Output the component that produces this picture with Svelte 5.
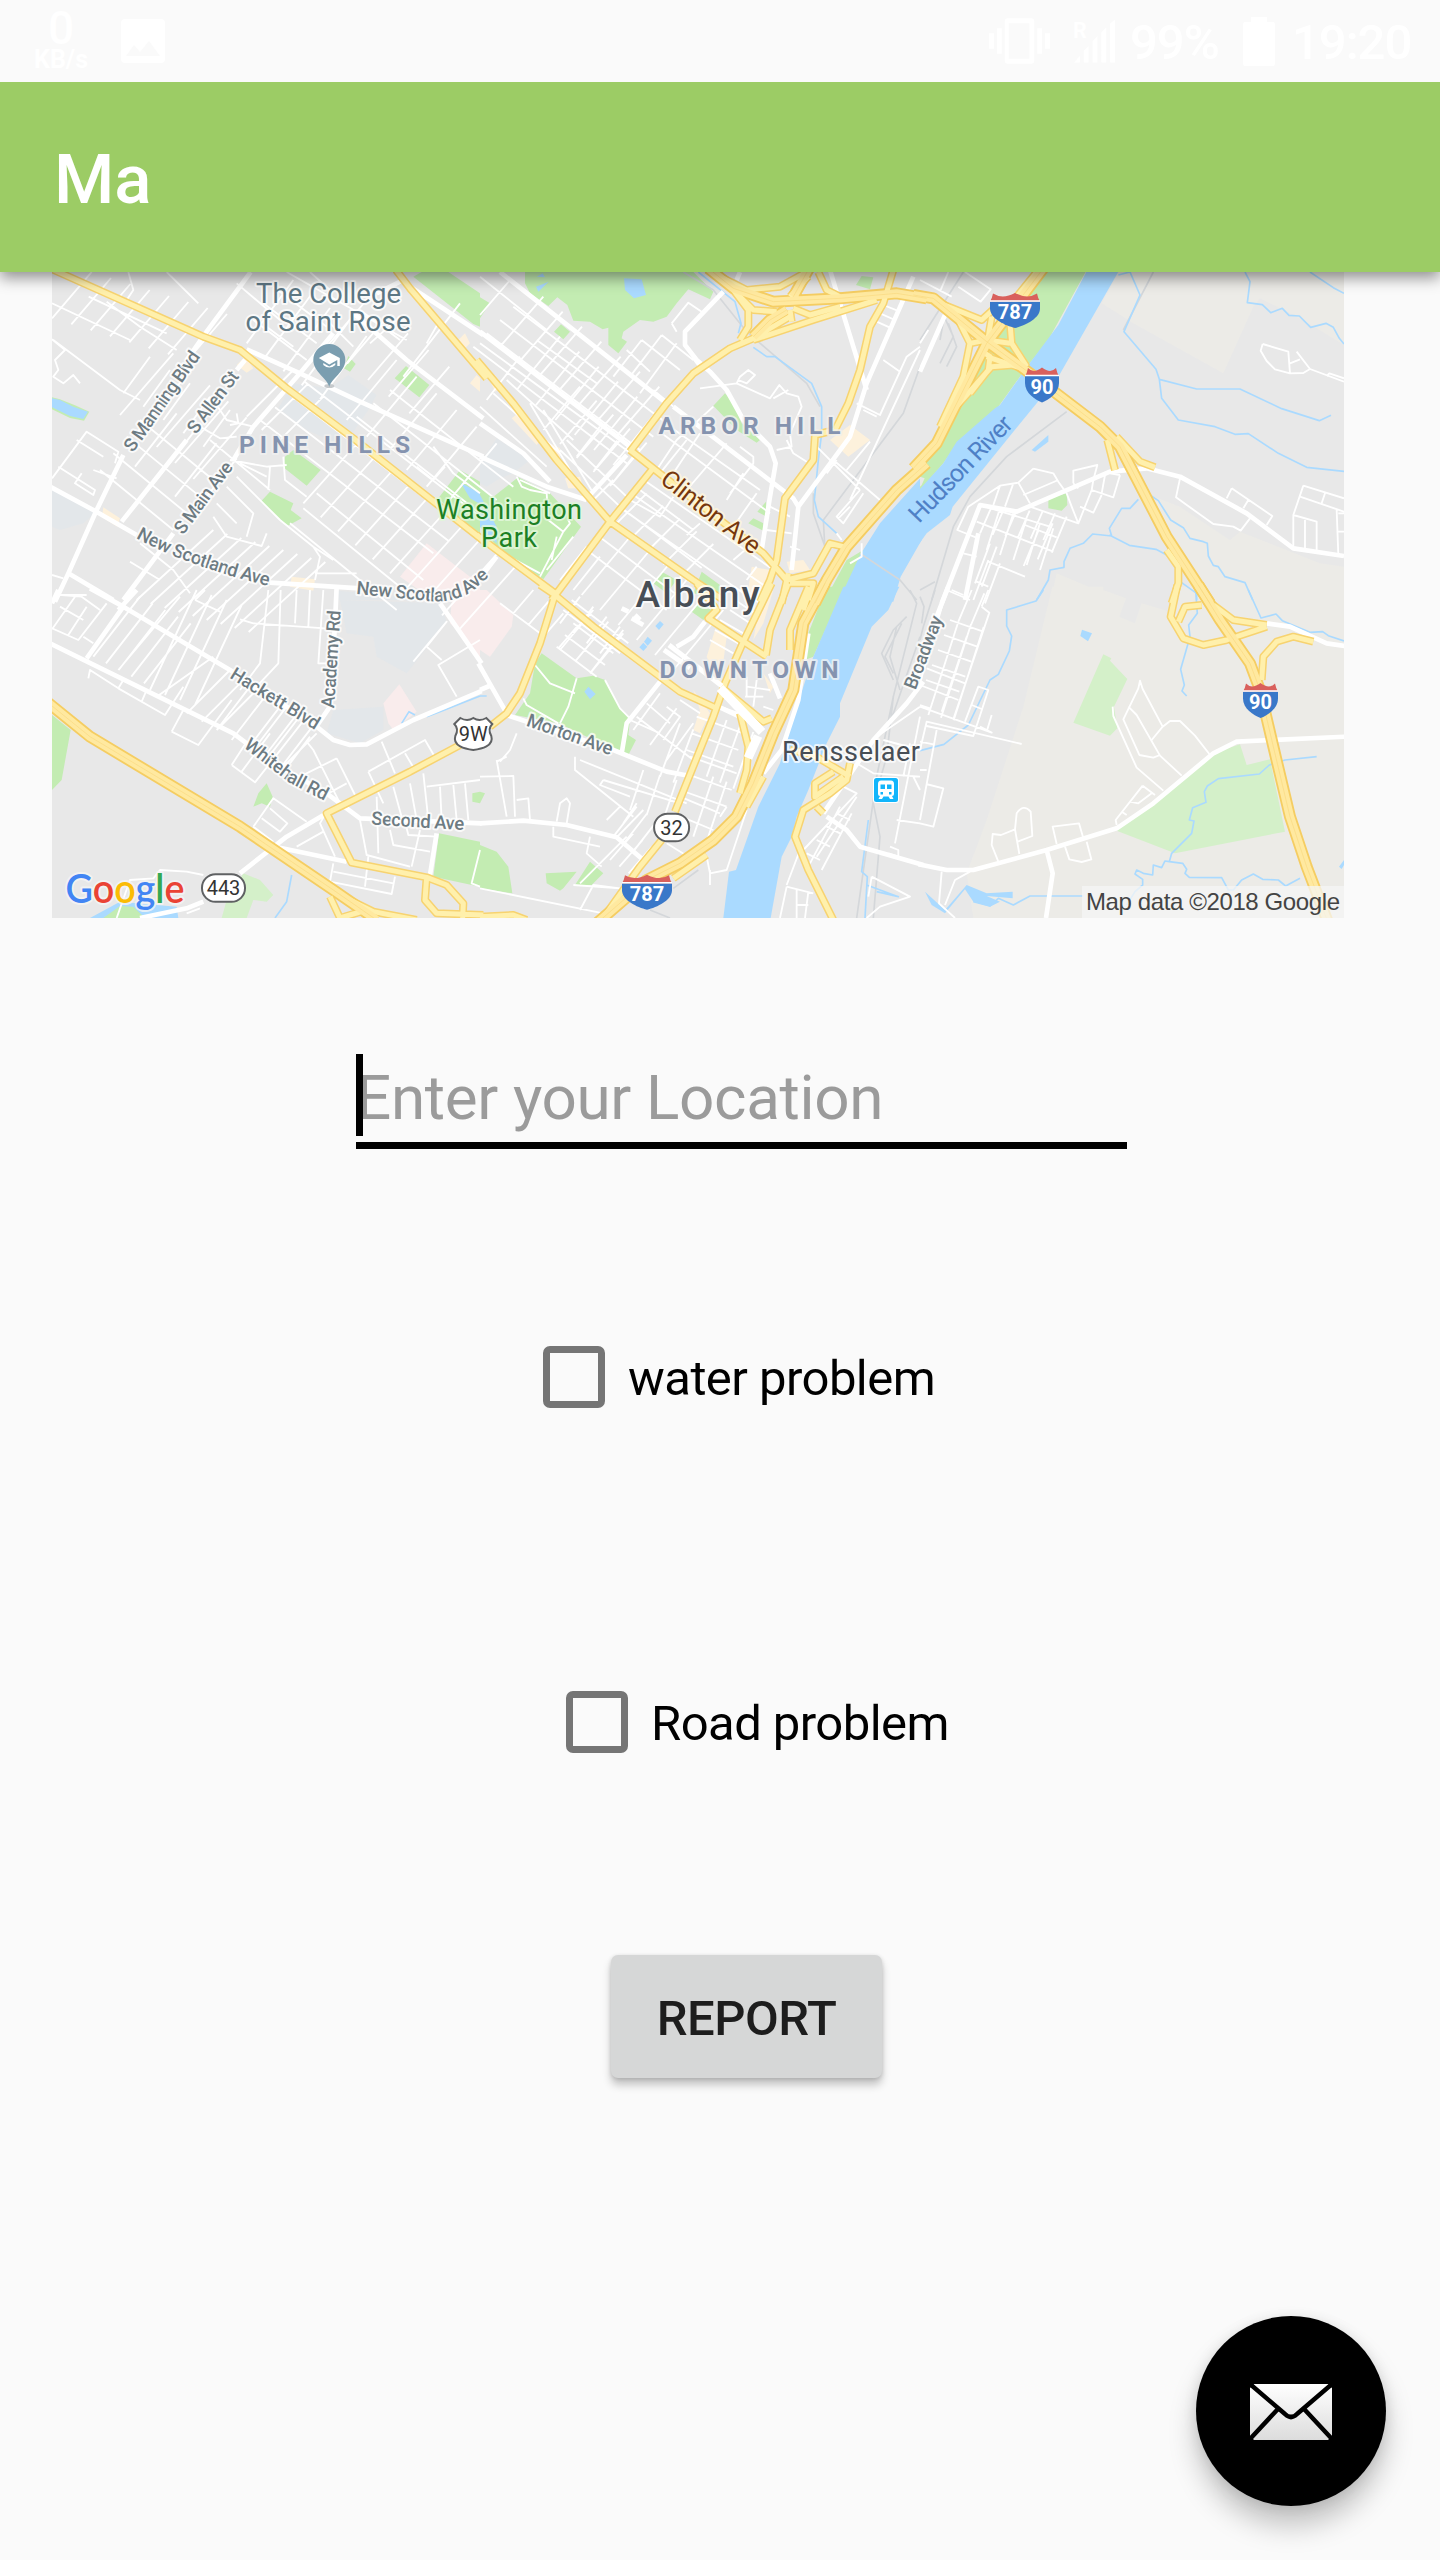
<script>
  // The map is authored as six sheets drawn at three times the display size.
  // Every sheet has an origin on the page and path data in its own units.
  // hatch entries: [x1, y1, x2, y2, step x, step y, count]
  const sheets = [
    {
      x: 40, y: 260,
      areas: [
        ['campus', 'M760 370L868 385L925 345L1010 405L985 450L940 515L880 545L800 510L715 445ZM36 690L170 755L130 790L60 810L36 800Z'],
        ['park', 'M1120 50L1145 36H1225L1320 100V200L1300 192ZM1098 318L1168 375L1138 412L1064 355ZM925 288L947 312L930 335L912 325ZM760 570L842 630L800 677L730 622L735 590ZM690 695L760 730L752 750L785 775L742 798L662 725ZM1260 630L1320 665V840L1195 715Z'],
        ['park', 'M36 412L60 418L105 436L148 455L132 482L90 474L36 448Z'],
        ['water', 'M36 415L60 420L100 440L144 455L130 477L90 468L36 442ZM1262 668L1320 700V732L1290 715Z'],
        ['pink', 'M1160 850L1290 950L1320 935V1020H1180L1080 950Z'],
        ['campus', 'M895 992L1200 1020H895Z'],
        ['shop', 'M590 315L615 290L640 325L620 338ZM190 742L240 775L232 800L186 772ZM755 950L825 958L820 992L750 980ZM1255 240L1275 220L1290 250L1275 265ZM1290 370L1310 345L1320 355V395Z']
      ],
      minor: 'M265 36L280 90L260 120M380 36L475 130M40 240L120 300L240 390L300 420M410 270L300 200L200 125M36 238L75 270L45 300L55 330L40 350L70 370L100 345L120 370M36 655L140 515L235 575L225 610M110 540L190 590M55 620L165 690L160 705L105 670L125 640M160 630L230 655M590 460L595 490L570 495M520 420L560 480L640 500M480 500L540 535L590 530M570 600L680 620L740 615M690 620L685 690M730 590L735 660L800 710M510 540L690 690M600 610L680 650M560 680L640 760L620 830M530 730L590 790M520 770L560 830L665 858L680 820M590 650L720 780M720 780L820 860L880 900M820 860L840 890L825 960M825 940H950M1180 560L1240 640L1320 700M1130 620L1180 660L1215 620M990 250L1080 170M850 170L940 260M680 200L760 260M590 70L720 180M300 850L400 930L450 1000M270 905L360 960M36 945L70 955M60 1005H140M740 36L1100 240M960 150L1080 240M810 36L870 90M1200 180L1160 250M1260 130L1090 350',
      hatch: [[36, 175, 155, 36, 58, 18, 8], [250, 400, 330, 290, 60, 40, 5], [240, 465, 400, 280, 55, 48, 5], [36, 130, 270, 240, 110, -20, 2], [285, 620, 410, 460, 60, 45, 4], [300, 480, 520, 660, -40, 50, 4], [620, 470, 760, 330, 45, 40, 3], [660, 480, 1180, 880, 45, -38, 4], [830, 700, 1150, 960, -40, 45, 3], [790, 730, 960, 540, 52, 42, 10], [920, 480, 1070, 300, 60, 50, 6], [860, 260, 980, 120, 62, 50, 5], [950, 470, 1320, 760, 50, -40, 3], [620, 250, 760, 60, 55, 42, 5], [290, 1020, 520, 810, 42, 12, 9], [640, 180, 800, 300, 30, -50, 3]],
      street: 'M632 36L500 215L440 300M250 585L170 750L85 940L45 1025M615 300L590 330M440 540L245 785M620 268L780 340L960 425L1330 590M880 220L780 340L640 500L580 600M400 820L250 1020M30 680L160 750L290 825M690 968L960 985M85 940L220 1020M940 160L1100 300L1330 475M1080 60L1330 225M1090 60L1010 100',
      artery: 'M30 25L490 230L600 270L740 385L940 535L1340 850M1068 30L1110 85L1340 355',
      highway: '', rail: '', stream: ''
    },
    {
      x: 480, y: 260,
      areas: [
        ['park', 'M135 36H640L700 95L690 118L625 88L590 130L560 170L520 185L480 180L430 215L425 235L441 245L415 280L385 255L385 203L368 208L330 185L280 182L262 135L232 112L205 138L150 100L135 70ZM0 112L30 130L0 175ZM243 193L270 215L250 238L222 215ZM735 400L760 430L785 490L840 540L830 548L770 510L700 437ZM0 680L40 710L115 652L210 700L303 800L190 958L150 930L60 870L0 800ZM858 725L860 770L832 755ZM820 775L850 790V812L805 790ZM1128 75L1145 48L1180 52L1170 88ZM545 935L590 960L560 1000L520 970ZM665 935L720 975V1020L640 1000ZM1150 870L1080 1020H1035L1100 900Z'],
        ['campus', 'M50 535L150 600L100 640L60 655L20 680L0 670V610Z'],
        ['water', 'M0 705L50 800V850L0 800ZM432 55L485 58L498 105L462 115L435 90ZM170 50L188 40L195 52ZM168 80L206 65L175 95Z'],
        ['water', 'M1325 650L1200 790L1140 885L1075 1025H1240L1262 950L1325 840Z'],
        ['shop', 'M25 350L45 345L70 380L45 395ZM95 475L120 455L190 530L170 555ZM200 545L240 565V600L215 580ZM255 655L300 650L310 685L265 685ZM1050 540L1110 495L1170 540L1105 590ZM920 905L970 900L990 930L930 940ZM815 920L870 930L850 1020H800ZM715 780L745 790L740 810Z']
      ],
      rail: 'M700 90L800 215L980 370L1020 440M1320 320L1270 460L1030 780L1035 870M610 36L700 90M1000 700V760L1035 860M1140 880L1260 960L1310 1020',
      stream: 'M655 36L765 125L783 190L775 220M820 262L860 290L885 290L995 370L1025 440L1025 520L1015 600L1003 720L1015 770L1070 820',
      minor: 'M0 50L200 210M90 60L0 165M580 440L520 390M575 190L625 128L665 155M575 190L590 215M660 385L770 370L780 350L805 330L825 345L800 370L775 360M770 370L870 415L898 375L920 400L955 410L965 440L930 520L935 560L890 570M925 390L880 415M920 540L940 580L980 605M545 225L640 300M485 240L600 330M440 270L510 335M485 240L400 350M545 225L450 350M590 250L480 400M700 440L590 540L530 630M545 520L870 760M570 500L840 690M780 560L820 590L820 610L750 700M740 550L620 690M620 540L540 640M660 520L580 640M790 640L740 720M660 790L620 825M830 700L760 800M500 640L440 720M480 690L640 810M450 720L540 770L580 710M400 660L340 720M860 810L935 820M870 740L930 770M830 840L760 900M800 960L830 920M1010 560L1140 690M1060 600L1200 720M1170 545L1100 630M1140 690L1070 770L1090 790L1150 700M1070 600L1040 640M1110 740L1075 775M1070 820L1085 840M1210 300L1260 335M1320 260L1280 290L1200 465L1130 430M1190 470L1150 450M1200 160L1245 180M1210 135L1260 155M1190 185L1235 205M1110 720L1320 270M1145 850V890L1110 910M960 870L930 860M110 650L125 680L150 690L200 700L205 780L250 815L270 790L265 780M250 815L180 950M230 830L215 900M50 870L180 940M120 660L210 700',
      hatch: [[0, 250, 480, 600, 45, -45, 1], [170, 240, 350, 370, 0, 0, 1], [20, 420, 120, 290, 0, 0, 1], [60, 260, 190, 110, 58, 45, 7], [110, 390, 240, 230, 58, 45, 6], [190, 510, 300, 380, 50, 42, 5], [290, 590, 360, 500, 52, 42, 3], [100, 140, 560, 490, -40, 40, 4], [0, 440, 200, 620, 40, -40, 3], [150, 430, 300, 680, 40, 20, 2], [240, 570, 420, 740, 20, -30, 2], [250, 960, 400, 780, 55, 45, 7], [320, 870, 560, 1050, 35, -42, 4], [400, 800, 500, 700, 50, 38, 5], [430, 750, 820, 1020, 35, -42, 3], [280, 830, 200, 930, 40, 30, 3]],
      street: 'M60 36L560 430M580 440L940 715L955 740M0 215L450 560M440 585L330 705M730 95L615 215L615 255L650 300L690 335L740 390L790 480L870 560L887 610L870 710L845 870M955 740L1110 530L1160 370L1300 50M1050 30L1080 130L1160 390M0 590L200 680L320 720M955 740L935 930M0 490L130 580L210 665M640 290L670 330M50 890L0 955M770 60L780 36',
      artery: 'M-10 300L100 430L230 600L390 785L640 960L730 1020M-10 825L225 1000M215 1020L390 785L515 630M450 570L545 645L850 880L920 960L1000 940L1050 850L1090 860M450 575L560 430L640 340L750 265L820 235L930 170M820 240L1000 180L1190 120M1240 30L1210 130L1170 200L1140 330L1105 430L1065 510L1005 525L1000 600L915 715L890 900L870 960L840 1025M925 940L905 1030M760 90L805 150V200L780 240M720 50L800 90L900 80L980 36M770 100L820 150L890 155M930 150L935 185M940 145L990 165L1080 140M985 50L930 110M1015 36L1040 90L1080 110M930 970H1000L985 1020',
      highway: 'M685 25L760 85L880 125L1080 115L1250 100L1340 115M990 20L940 110M820 230L870 180L920 150M1340 610L1250 690L1100 860L1040 960L1005 1030'
    },
    {
      x: 920, y: 260,
      areas: [
        ['rural', 'M600 30H1272V255L1190 205L1130 170L1020 115L1000 140L910 340L640 190L545 130ZM690 705L780 740L930 840L960 815L1200 910L1272 920V1020H870L780 900L720 760ZM410 940L600 1020H392Z'],
        ['park', 'M385 30H500L385 240L325 315L235 440L115 545L70 610L10 680L0 690V620L100 440L200 250L300 130ZM385 715L440 700L442 735L425 752L385 745Z'],
        ['land', 'M0 650L14 655L5 675L0 680Z'],
        ['water', 'M502 30L415 195L325 315L240 435L225 445L110 545L70 610L-5 692V855L20 820L90 765L98 740L260 540L415 350L598 30ZM335 570L385 525V545L345 575Z']
      ],
      rail: 'M130 36L0 240M700 36L610 210M440 455L260 590L150 710L100 800L35 1020M70 185L60 240M85 190L110 260L80 320M75 175L100 230L60 310M0 990L45 965',
      stream: 'M595 45L630 36L660 105L612 215L708 328L718 358L725 415L775 480L885 500L945 523L985 521L1075 580L1160 622L1272 634M718 358L830 387H960L1085 446L1198 482L1233 466M975 36L990 65L982 128L1027 134L1052 158L1087 145L1107 166L1138 168L1172 202L1218 190L1240 202L1258 235L1272 252M1170 36L1240 83L1272 100M655 718L630 745H605L568 805L575 828L518 822L490 850L450 865L432 905V922L390 930L385 960L350 1020M568 825L628 856L708 868L750 890M690 705L715 722L752 780L790 803L810 835L850 845L862 850L865 888L880 916L895 920L915 950L975 968L998 1020M785 968L830 1000V1020',
      minor: 'M135 36L212 88L182 125L115 80M85 36L60 95M0 60L95 110M25 210L0 250M1028 252L1022 272L1040 303L1065 328L1110 340L1150 339L1170 327L1130 275M1028 252L1105 275L1110 340M1110 310L1140 298M1170 327L1272 365M1220 348L1228 340L1272 355M340 626L295 668L330 730M340 626L400 640L415 665L440 700L455 740L475 790M295 668L240 677L145 740L112 810L175 835M310 705L415 660M460 670V632L532 615L520 660M460 670L475 685M600 645L580 712L515 690M545 705L520 758L480 740M520 660L515 690L475 790L330 740M555 645L545 700M570 640L600 645M780 655L768 712L880 792L940 800L962 812L990 775M935 685L920 715M935 685L1057 768L1040 795M985 720L970 745M1150 677L1120 765V860M1150 677L1272 715M1140 710L1272 755M1215 700L1205 730M1120 765L1190 785V870M1155 780V865M1250 750L1255 885M1272 760H1255M1272 815H1255M240 677L220 735M280 670L255 740M180 735L390 800',
      hatch: [[215, 740, 180, 820, 38, 4, 6], [200, 870, 240, 745, 40, 15, 5], [170, 785, 400, 875, -20, 50, 1], [130, 880, 170, 890, -10, 40, 1], [205, 905, 315, 950, 20, -55, 1], [315, 795, 410, 832, 20, -45, 1], [440, 770, 395, 878, -42, 20, 3], [210, 850, 165, 970, 20, 10, 2], [170, 965, 205, 980, -75, 25, 2], [160, 1020, 205, 900, 35, 10, 2]],
      street: 'M75 165L0 335M65 1030L180 735L290 755L430 695L570 635L680 625L780 650L980 760L1120 865L1272 888M135 1020L175 820',
      artery: 'M60 130L185 180L240 130M110 170L150 250L130 350L60 500M200 260L215 170M150 250L200 240L260 180M180 270L210 290L205 330L150 400M200 290L260 310L320 330M270 190L275 250L320 320M100 450L215 320L280 315M200 240L270 250M562 540L585 630M590 530L660 605L705 622M740 870L775 920V970L755 1030M290 110L350 36',
      highway: 'M-20 105L40 115L200 245L330 340L540 500L600 560L740 830L870 1030M370 25L200 250L140 370L50 550L-20 625'
    },
    {
      x: 40, y: 590,
      areas: [
        ['campus', 'M900 30L1200 40L1220 95L1100 250L1010 200L1000 140L920 130ZM880 360L1030 350V420L960 460L860 430Z'],
        ['pink', 'M1235 30L1320 0V215L1290 160L1230 100ZM1078 283L1130 365L1060 420L1045 400L1030 340Z'],
        ['park', 'M36 375L92 420L65 570L36 600ZM680 580L698 620L690 650L665 640L640 650L655 610ZM1197 730L1320 755V890L1180 860ZM185 984L240 945L290 948L315 984ZM1297 610L1320 605V640L1297 635Z'],
        ['wood', 'M610 850L660 870L700 915L680 935L640 930L620 984H545L560 930Z'],
        ['water', 'M150 984L240 935L410 950L415 984H315L280 950L240 948L190 984Z']
      ],
      rail: '',
      stream: 'M755 855L740 935L705 984M1320 318L1200 365L1160 380M1125 375L1107 365L1085 400M620 270L740 340',
      minor: 'M36 115L115 150L200 40M65 15L125 20L180 60M36 118L105 20M85 135L140 50M130 140L160 160M145 265L150 240L235 295L375 375L430 290M235 295L250 270M305 335L320 300M395 425L475 465L575 330M430 360L395 425M600 88L640 100L855 115M685 0L660 220L600 300M722 0L715 220L640 300M770 0L765 100M810 0L805 110M850 0L835 220H860M465 30L540 65M465 30L495 0M575 525L645 577L800 380M575 525L620 455M605 545L690 430M720 540L830 430M750 520L810 440M800 455L820 480L900 640M890 505L780 560M890 505L945 615M865 610L920 580M1025 455L1065 550M985 545L1155 450L1190 510M985 545L1030 640M1095 490L1125 540M1160 170L1220 95L1120 215M1160 170L1205 210M1320 150L1195 225L1250 320M640 710L700 625L800 695M640 710L700 755M665 685L720 725L742 700L690 655M860 665L840 700L885 800M770 770L850 725M960 690L980 795L1110 830M880 820L870 875L1055 912L1065 860M880 845L1060 880M985 800L975 890M230 984L270 870L340 865L360 840L440 845L490 855M1160 590L1320 570M1200 590L1205 690M1240 585L1250 690M1275 580L1285 690M1150 550L1165 690M1060 590L1090 700M1110 580L1130 690M1010 620L1015 790M1050 720L1060 765L1170 785M1100 715L1105 735L1190 740M1140 720L1115 830M1320 780L1295 880L1320 890M440 970L480 955',
      hatch: [[160, 200, 300, 20, 38, 20, 5], [235, 240, 420, 20, 0, 0, 1], [330, 300, 470, 0, 45, 15, 4], [350, 320, 520, 200, 0, 0, 1], [440, 370, 570, 240, 45, 25, 3], [530, 420, 630, 290, 45, 30, 4], [640, 480, 740, 350, 40, 28, 3], [60, 50, 130, 90, 0, 0, 1]],
      street: 'M150 -5L250 50L570 240L620 270L830 410L880 450L930 465L980 463L1120 390L1325 303M30 160L580 430L700 520L860 610L960 685L1325 700M250 50L140 205M235 60L290 0M890 -10L885 100L870 350L825 415M1200 40L1325 220M860 670L740 740L600 850M705 770L920 815M1190 730L1170 855M300 984L440 955L490 935M55 0L36 40',
      artery: 'M1260 465L1110 545L860 670L935 818L1160 862L1220 885L1270 940L1268 984M1160 862L1155 930L1190 970L1330 975M870 920L900 984M930 930L1000 965L1130 990M900 984L980 960',
      highway: 'M20 335L150 440L600 710L880 900L1010 990'
    },
    {
      x: 480, y: 590,
      areas: [
        ['pink', 'M0 0H20L100 75L95 110L30 200L0 180Z'],
        ['park', 'M185 190L290 265L340 257L375 270L420 355L450 390L445 435L468 450L445 495L415 485L235 400L105 375L150 310L165 220ZM0 765L50 785L85 830L97 910L0 895ZM197 850L290 845L250 895L240 902L200 880ZM330 815L370 850L335 885L285 885ZM655 40L695 60L670 90L635 65ZM1095 -10L1000 200L975 210L985 130L1040 -10ZM0 605L15 610L0 640Z'],
        ['shop', 'M705 120L740 140L720 290L680 200ZM640 300L690 370L660 430L640 420L660 360ZM840 40L880 0L850 100L820 150ZM850 250L880 290L870 310Z'],
        ['water', 'M1090 -10L1000 200L950 350L900 520L835 650L768 840L747 845L730 984H872L905 800L935 740L950 680L985 600L1040 460L1080 380V340L1175 110L1225 60L1258 -10ZM540 93L551 103L537 120L526 108ZM503 140L516 152L503 167L492 155ZM490 158L502 170L490 183L478 172ZM325 290L347 312L330 328L313 305Z']
      ],
      rail: 'M1290 0L1310 40L1240 320L1190 560L1130 984M1280 80L1240 120L1205 190L1240 270M1250 110L1230 200L1260 300M1265 100L1215 200L1240 250M1240 320L1220 500L1180 640L1200 740L1180 984M1320 140L1230 400M655 840L580 895M510 960L570 984',
      stream: 'M1165 690L1145 845L1162 860L1155 984M1160 885L1255 920L1190 905M0 318H20',
      minor: 'M165 225L210 280L285 310M290 265L265 350L240 400M375 270L420 355L450 385M130 325L140 345L235 400M0 560L100 558L105 680M50 510L80 680M60 515L90 480L110 430M50 515L80 500M285 500V540L460 680M300 510L620 640M370 570L360 585L450 620M370 570L600 640M110 630L145 625L150 690M230 695L240 640L260 625L270 640L260 700M220 710V740L360 770M330 740L320 790L365 830M280 885L420 895L340 885L300 960M0 895L370 970M420 650L380 690M470 640L430 700M410 742L490 660M300 880L440 740M680 800L690 850L740 840L800 660M690 840V885M720 680L740 650M560 760L625 800M500 340L570 400M450 390L540 430M470 380L640 510M560 350L600 380L550 450M600 330L660 370M1000 0M920 890L1000 910M920 890L900 984M950 900V984M985 905L975 984M950 945H985M970 780L1130 610L1090 590M1130 620L1010 800M920 885L960 780M1175 860L1290 920L1200 950L1160 984M1175 860L1165 920M1230 770L1255 780V800L1225 790M1320 350L1190 440M1130 520L1180 550L1320 560M1300 560L1320 600M1320 380L1245 760M1250 690L1320 700M1210 450L1320 480M1290 460L1270 560M800 290L870 300M795 320H850M800 260V320M830 270L820 350M850 350L880 360',
      hatch: [[100, 70, 160, 0, 45, 35, 4], [240, 100, 300, 20, 40, 30, 4], [60, 40, 180, 130, 30, -40, 1], [240, 180, 340, 60, 45, 35, 3], [250, 60, 420, 190, 25, -30, 2], [330, 250, 430, 120, 0, 0, 1], [230, 170, 350, 260, 25, -35, 3], [460, 420, 540, 310, 50, 45, 3], [540, 560, 600, 400, 40, 18, 2], [620, 480, 760, 530, 15, -50, 4], [600, 600, 740, 650, 15, -50, 3], [580, 670, 700, 720, 20, -50, 2], [680, 560, 740, 390, 40, 18, 3], [640, 740, 700, 560, 40, 15, 2], [450, 660, 490, 540, 50, 15, 3], [400, 740, 470, 650, 30, 22, 4], [390, 810, 460, 730, 28, 20, 3], [990, 820, 1080, 650, 35, 20, 2], [980, 790, 1020, 810, 30, -40, 4], [690, 150, 760, 190, 15, -30, 3], [750, 60, 810, 100, 15, -30, 3]],
      street: 'M1330 275L1280 340L1180 450L1030 670M1040 680L1100 720L1140 770L1330 825M540 275L440 400L425 490M80 375L400 480L560 545L630 558M-5 220L80 370M0 700L130 692L260 705L410 742L490 810M675 95L640 140L590 170M715 350L790 385M985 130L955 330L905 480L850 550M870 250L900 325M0 300L35 285M455 85L490 105M465 75L480 90M425 55L445 65',
      artery: 'M180 -15L225 15L340 110L540 260L600 305L710 355M228 5L180 160L120 310L80 370L30 410M875 -20L790 155L735 280L700 380L585 665M925 -20L870 120L858 195M650 -20L710 60L685 85L860 200M735 300L850 395L875 385M545 750L480 830L365 990M930 480L1000 495L1110 560M1110 520L1100 570L1050 610L970 660L945 740L985 840L1060 990M1060 545L1005 580V620L1090 560M1010 650L1030 670M780 370L805 470L800 540L780 610M850 560L800 650M680 795L580 865M985 -10L930 120V180M0 980L100 975L140 990M990 0L970 60',
      highway: 'M1035 -20L970 100L940 300L880 430L820 580L770 680L700 750L600 820L500 870L350 1000'
    },
    {
      x: 920, y: 590,
      areas: [
        ['rural', 'M397 -10H550V0L618 25L598 80L645 100L665 40L750 65L760 -10H1272V984H160L140 850L200 690L310 350Z'],
        ['wood', 'M550 193L574 205L570 212L622 267L582 350L592 415L570 437L460 398ZM960 463L980 525L1050 508L1095 725L765 790L590 722L700 640L880 490Z'],
        ['water', 'M486 119L516 130L504 154L481 138ZM15 905L75 960L140 885L200 910L278 905V925L200 918L240 935L210 950L160 935L135 898L75 970L35 945ZM1272 810L1257 830L1265 837L1272 825Z']
      ],
      rail: 'M45 0L10 110L0 150M0 20L12 50L5 100',
      stream: 'M370 0L348 33L260 60V108L275 138L268 183L235 253L210 270L145 405L72 463L0 482M985 0L1023 84L1068 72L1087 92L1170 127L1208 125L1225 137L1272 153M827 0L832 70L806 105L810 140L782 238L793 285L786 303L800 318M1190 500L1095 510L1048 525L1018 552L895 566L862 588L853 605L858 637L818 653L808 690L822 693L815 730L755 790L748 815L735 813L725 833L700 825L698 855L670 850L650 840L645 852L668 868V885L645 905L620 945M748 815L788 820L800 838L795 850L808 862L905 863L925 900H940L965 870L1000 852L1028 868L1075 870L1097 888L1140 865M160 935L210 948L235 925L280 945L330 918H490',
      minor: 'M0 480L20 395L305 462M0 350L215 428L180 410M215 375L200 425M20 408L160 438L205 300L175 290L135 395M155 345L185 357M50 420L0 690M0 455L40 463M0 540H20M18 582L70 595L40 710L0 700M185 50L208 68L100 388M205 0L185 50M655 295L660 272L668 297L728 410L695 450M655 295L610 388L658 495L700 503L720 495M625 350L650 375L720 497L785 557M728 410L750 393H780L825 437L868 492M578 350L580 378L650 533L730 602M668 587L705 615M668 587L587 690L590 705M695 610L655 640L630 635M605 665L620 675M235 815L215 765L218 732L243 735L285 718L290 670Q310 640 332 665L337 738L293 755M285 718L298 792M410 762L398 710L477 700L490 745M435 770L448 808L485 816L514 808L500 755M65 845L57 940L105 984M75 945L105 870L150 845',
      hatch: [[0, 280, 80, 0, 0, 0, 1], [25, 375, 115, 95, 38, 8, 3], [90, 90, 190, 125, -18, 45, 5], [80, 0, 150, 30, 30, 0, 1], [115, 95, 155, 0, 38, 10, 2], [0, 345, 30, 355, 0, 0, 1], [65, 365, 140, 140, 0, 0, 1], [0, 285, 115, 330, 20, -50, 2]],
      street: 'M85 -10L50 80M1040 100L1110 110L1220 160L1275 168M-5 823L80 840H160L380 780L590 715L700 640L880 490L950 455L1275 440M380 780L398 850L378 984',
      artery: 'M772 -15L752 80L790 145L850 165L920 150L1040 110M845 45L795 50L775 95M880 45L940 90L1040 105M1180 155L1120 140L1070 155L1030 200L1025 270',
      highway: 'M835 -15L900 90L990 220L1020 300L1060 470L1110 680L1160 830L1225 1000'
    }
  ];

  const hatchPath = (rows) =>
    rows
      .map(([a, b, c, d, sx, sy, n]) =>
        Array.from({ length: n }, (_, i) => `M${a + sx * i} ${b + sy * i}L${c + sx * i} ${d + sy * i}`).join('')
      )
      .join('');

  const labels = [
    { t: 'The College', k: 'poi', d: 'M256 303H420', w: 145 },
    { t: 'of Saint Rose', k: 'poi', d: 'M245.5 331H430', w: 165 },
    { t: 'PINE HILLS', k: 'area', d: 'M239 452.5H430', w: 171 },
    { t: 'ARBOR HILL', k: 'area', d: 'M658.5 433.5H860', w: 182 },
    { t: 'DOWNTOWN', k: 'area', d: 'M659.5 677.5H860', w: 179 },
    { t: 'Albany', k: 'city', d: 'M635.5 606.5H780', w: 124 },
    { t: 'Washington', k: 'green', d: 'M436 518.5H600', w: 146 },
    { t: 'Park', k: 'green', d: 'M481 546.5H570', w: 56 },
    { t: 'Clinton Ave', k: 'brown', d: 'M659 482L759 560', w: 119 },
    { t: 'Hudson River', k: 'river', d: 'M919 524L1025 414', w: 137 },
    { t: 'Broadway', k: 'road', d: 'M915.5 690.5L950 600', w: 77 },
    { t: 'S Manning Blvd', k: 'road', d: 'M133 453L211.5 341', w: 118 },
    { t: 'S Allen St', k: 'road', d: 'M196 435L250.5 362', w: 73 },
    { t: 'S Main Ave', k: 'road', d: 'M183 535.5L245.5 451', w: 85 },
    { t: 'New Scotland Ave', k: 'road', d: 'M136 538Q190 568 285 590', w: 141 },
    { t: 'New Scotland Ave', k: 'road', d: 'M356 594L420 600Q452 605 472 591L500 567', w: 141 },
    { t: 'Academy Rd', k: 'road', d: 'M334 708.5L342 590', w: 98 },
    { t: 'Hackett Blvd', k: 'road', d: 'M229 677.5L331.5 740', w: 101 },
    { t: 'Whitehall Rd', k: 'road', d: 'M243 747L290 783L340 809', w: 98 },
    { t: 'Second Ave', k: 'road', d: 'M371 824.5L480 831', w: 93 },
    { t: 'Morton Ave', k: 'road', d: 'M525.5 725.5L630 762', w: 90 },
    { t: 'Rensselaer', k: 'town', d: 'M782 761H940', w: 138 }
  ];

  const interstates = [
    { x: 1015, y: 310.5, w: 50, n: '787' },
    { x: 1042, y: 385, w: 34, n: '90' },
    { x: 647, y: 892.2, w: 50, n: '787' },
    { x: 1260.5, y: 700.5, w: 35, n: '90' }
  ];
  const routes = [
    { x: 223.5, y: 888, w: 43, n: '443' },
    { x: 671.6, y: 827.5, w: 35, n: '32' }
  ];
  const crest = (w) =>
    `M${-w / 2 + 3} -17Q${-w / 4} -11 0 -17.5Q${w / 4} -11 ${w / 2 - 3} -17Q${w / 2 - 2} -12 ${w / 2} -9H${-w / 2}Q${-w / 2 + 2} -12 ${-w / 2 + 3} -17Z`;
  const body = (w) => `M${-w / 2} -9H${w / 2}V-2C${w / 2} 8 ${w / 5} 15 0 17.5C${-w / 5} 15 ${-w / 2} 8 ${-w / 2} -2Z`;
</script>

{#snippet layer(key)}
  {#each sheets as s}
    <path class={key} transform="translate({s.x} {s.y}) scale(0.33333)" d={s[key]} />
  {/each}
{/snippet}

<div class="screen">
  <header class="status">
    <div class="speed"><b>0</b><small>KB/s</small></div>
    <svg class="photo" viewBox="0 0 44 44"><path fill-rule="evenodd" d="M4 0H40Q44 0 44 4V40Q44 44 40 44H4Q0 44 0 40V4Q0 0 4 0ZM5 37H39L28 22L19 33L13 26Z" /></svg>
    <div class="tray">
      <svg class="vibrate" viewBox="0 0 62 46"><path fill-rule="evenodd" d="M19 0H43Q46 0 46 3V43Q46 46 43 46H19Q16 46 16 43V3Q16 0 19 0ZM20 5V41H41V5ZM0 15H5V31H0ZM8 10H13V36H8ZM49 10H54V36H49ZM57 15H62V31H57Z" /></svg>
      <svg class="signal" viewBox="0 0 42 44"><path d="M0 44L6 37V44ZM10 32L15 27V44H10ZM19 22L24 17V44H19ZM28 13L33 8V44H28ZM37 4L42 0V44H37Z" /><text x="-1" y="19">R</text></svg>
      <span class="percent">99%</span>
      <svg class="battery" viewBox="0 0 32 49"><path d="M8 0H24V5H30Q32 5 32 7V47Q32 49 30 49H2Q0 49 0 47V7Q0 5 2 5H8Z" /></svg>
      <span class="time">19:20</span>
    </div>
  </header>

  <div class="appbar"><h1>Ma</h1></div>

  <main>
    <svg class="map" viewBox="52 272 1292 646">
      <rect class="land" x="52" y="272" width="1292" height="646" />
      {#each sheets as s}
        <g transform="translate({s.x} {s.y}) scale(0.33333)">
          {#each s.areas as [kind, d]}<path class={kind} {d} />{/each}
        </g>
      {/each}
      {@render layer('rail')}
      {@render layer('stream')}
      {#each sheets as s}
        <path class="minor" transform="translate({s.x} {s.y}) scale(0.33333)" d={s.minor + hatchPath(s.hatch)} />
      {/each}
      {@render layer('street')}
      <g class="casing">{@render layer('artery')}{@render layer('highway')}</g>
      <g class="fill">{@render layer('artery')}{@render layer('highway')}</g>
      <g class="median">{@render layer('highway')}</g>
      <path class="plaza" d="M720 688L762 732M758 736L748 758" />
      <path class="plaza thin" d="M669 645L722 686M664 650L690 668" />

      {#each labels as l, i}
        <path id="run{i}" d={l.d} fill="none" />
        <text class={l.k}><textPath href="#run{i}" textLength={l.w} lengthAdjust="spacing">{l.t}</textPath></text>
      {/each}

      <g transform="translate(329.3 360)">
        <ellipse cx="0" cy="26" rx="5" ry="2" fill="#c5c9cc" />
        <path d="M0 27C-2 18 -16 12 -16 0A16 16 0 0 1 16 0C16 12 2 18 0 27Z" fill="#7b9eb0" />
        <path d="M-10.500 -2L0 -7.500L10.500 -2V6H8V0L0 4.500ZM-6 3L0 6.500L6 3V5Q0 10 -6 5Z" fill="#fff" />
      </g>

      <g transform="translate(886 790)">
        <rect x="-13" y="-13" width="26" height="26" rx="3" fill="#fff" />
        <rect x="-12" y="-12" width="24" height="24" rx="2.500" fill="#12b5fb" />
        <path fill="#fff" fill-rule="evenodd" d="M-5 -9.500H5Q8 -9.500 8 -6V4Q8 6 6 6L7.500 9H4L2.500 6.500H-2.500L-4 9H-7.500L-6 6Q-8 6 -8 4V-6Q-8 -9.500 -5 -9.500ZM-5.500 -5.500V-1H-1V-5.500ZM1 -5.500V-1H5.500V-5.500ZM-5.500 2V4.500H-3V2ZM3 2V4.500H5.500V2Z" />
      </g>

      {#each interstates as s}
        <g transform="translate({s.x} {s.y})">
          <path d={body(s.w)} fill="#3a78c9" />
          <path d={crest(s.w)} fill="#d9605c" />
          <path d="M{-s.w / 2} -9.500H{s.w / 2}" stroke="#fff" stroke-width="1.500" />
          <text class="shield" y="8.500">{s.n}</text>
        </g>
      {/each}
      {#each routes as r}
        <g transform="translate({r.x} {r.y})">
          <rect class="plate" x={-r.w / 2} y="-13.800" width={r.w} height="27.600" rx="13.500" />
          <text class="route" y="7">{r.n}</text>
        </g>
      {/each}
      <g transform="translate(473.300 734)">
        <path class="plate" d="M-13 -16Q-6 -12 0 -16Q6 -12 13 -16L19 -10Q14 -5 18 2C21 12 8 15 0 16C-8 15 -21 12 -18 2Q-14 -5 -19 -10Z" />
        <text class="route" y="7">9W</text>
      </g>

      <text class="logo" x="65.500" y="903" textLength="119" lengthAdjust="spacingAndGlyphs"><tspan fill="#4285f4">G</tspan><tspan fill="#ea4335">o</tspan><tspan fill="#fbbc05">o</tspan><tspan fill="#4285f4">g</tspan><tspan fill="#34a853">l</tspan><tspan fill="#ea4335">e</tspan></text>
      <rect x="1082" y="886" width="262" height="32" fill="#f5f5f5" opacity="0.750" />
      <text class="credit" x="1086" y="910" textLength="254">Map data ©2018 Google</text>
    </svg>

    <div class="field"><i class="caret"></i><span>Enter your Location</span></div>
    <div class="option water-row"><i class="box"></i><span>water problem</span></div>
    <div class="option road-row"><i class="box"></i><span>Road problem</span></div>
    <button class="report">REPORT</button>
    <div class="fab">
      <svg viewBox="0 0 82 58">
        <defs><linearGradient id="paper" x1="0" y1="0" x2="0" y2="1"><stop offset="0" stop-color="#fff" /><stop offset="1" stop-color="#dcdcdc" /></linearGradient></defs>
        <path fill="url(#paper)" d="M4 1H78L82 5V53L78 57H4L0 53V5Z" />
        <path fill="none" stroke="#000" stroke-width="4.500" stroke-linejoin="round" d="M0 1L35 31Q41 37 47 31L82 1M0 56L27 27M82 56L55 27" />
      </svg>
    </div>
  </main>
</div>

<style>
  :global(body) { margin: 0; background: #fafafa; }
  .screen { width: 1440px; height: 2560px; display: flex; flex-direction: column; background: #fafafa; font-family: Roboto, sans-serif; overflow: hidden; }
  .status { height: 82px; flex: none; box-sizing: border-box; padding: 0 28px 0 32px; display: flex; align-items: center; color: #fff; fill: #fff; }
  .speed { width: 58px; display: flex; flex-direction: column; align-items: center; }
  .speed b { font-size: 46px; line-height: 38px; font-weight: 500; }
  .speed small { font-size: 25px; line-height: 26px; font-weight: 700; }
  .photo { width: 44px; height: 44px; margin-left: 31px; }
  .tray { margin-left: auto; display: flex; align-items: center; font-size: 49px; font-weight: 500; }
  .vibrate { width: 61px; height: 46px; margin-right: 24px; }
  .signal { width: 41px; height: 44px; margin-right: 15px; overflow: visible; }
  .signal text { font-size: 22px; font-weight: 700; }
  .percent { width: 92px; margin-right: 21px; letter-spacing: -1px; line-height: 82px; padding-top: 3px; }
  .battery { width: 32px; height: 49px; margin-right: 17px; }
  .time { letter-spacing: -1px; width: 120px; line-height: 82px; padding-top: 3px; }

  .appbar { height: 190px; flex: none; display: flex; align-items: center; padding-left: 54px; box-sizing: border-box; background: #9ccc65; box-shadow: 0 6px 14px rgba(0, 0, 0, .42); clip-path: inset(0 0 -40px 0); z-index: 1; }
  h1 { margin: 6px 0 0; font-size: 69px; line-height: 80px; font-weight: 500; color: #fff; }

  main { flex: 1; display: flex; flex-direction: column; align-items: flex-start; }
  .map { display: block; width: 1292px; height: 646px; margin-left: 52px; flex: none; overflow: hidden; }
  .land { fill: #e8e8e8; }
  .rural { fill: #ecebe7; }
  .park { fill: #c3ecb2; }
  .wood { fill: #d4f0c9; }
  .water { fill: #aadaff; }
  .campus { fill: #e3e7ea; }
  .pink { fill: #f9ecec; }
  .shop { fill: #fdf1dc; }
  .rail, .stream, .minor, .street, .artery, .highway { fill: none; stroke-linejoin: round; }
  .rail { stroke: #d4d7da; stroke-width: 5; }
  .stream { stroke: #aadaff; stroke-width: 5; }
  .minor { stroke: #fff; stroke-width: 5.5; }
  .street { stroke: #fff; stroke-width: 14; }
  .plaza { fill: none; stroke: #fff; stroke-width: 9; }
  .thin { stroke-width: 5; }
  .casing .artery { stroke: #f7d370; stroke-width: 24; }
  .casing .highway { stroke: #f5cd62; stroke-width: 36; }
  .fill .artery { stroke: #fff0ac; stroke-width: 15; }
  .fill .highway { stroke: #ffe9a0; stroke-width: 25; }
  .median .highway { stroke: #f9da82; stroke-width: 2; }

  .map text { paint-order: stroke; stroke: rgba(255, 255, 255, .75); stroke-width: 4px; stroke-linejoin: round; }
  .map .poi { font-size: 27.5px; fill: #5d7784; }
  .map .area { font-size: 24.5px; font-weight: 700; fill: #8593af; stroke: rgba(240, 240, 240, .8); }
  .map .city { font-size: 37px; font-weight: 500; fill: #474e56; }
  .map .town { font-size: 27px; fill: #474e56; }
  .map .green { font-size: 27px; fill: #1c8024; stroke: rgba(225, 247, 218, .85); }
  .map .brown { font-size: 25px; fill: #76370d; stroke: rgba(255, 247, 220, .8); }
  .map .river { font-size: 25px; fill: #4f80c6; stroke: none; }
  .map .road { font-size: 18.5px; font-weight: 500; fill: #6d7b82; }
  .map .shield { font-size: 20px; font-weight: 700; text-anchor: middle; fill: #fff; stroke: none; }
  .map .route { font-size: 20px; text-anchor: middle; fill: #333; stroke: none; }
  .plate { fill: #fff; stroke: #5f6163; stroke-width: 2; }
  .map .logo { font-family: Lato, sans-serif; font-size: 41px; font-weight: 600; stroke: rgba(245, 245, 245, .8); }
  .map .credit { font-family: "Liberation Sans", Arial, sans-serif; font-size: 24px; fill: #444; stroke: none; }

  .field { width: 771px; height: 95px; box-sizing: border-box; margin: 136px 0 0 356px; border-bottom: 7px solid #000; display: flex; align-items: flex-start; font-size: 62px; letter-spacing: -.35px; line-height: 88px; color: #9b9b9b; white-space: nowrap; }
  .field span { margin-left: -7px; }
  .caret { width: 7px; height: 82px; background: #000; flex: none; z-index: 1; }
  .option { height: 63px; display: flex; align-items: center; font-size: 49px; letter-spacing: -.55px; color: #000; white-space: nowrap; }
  .box { width: 62px; height: 62px; box-sizing: border-box; border: 7px solid #757575; border-radius: 7px; }
  .option span { margin-left: 23px; line-height: 63px; padding-top: 4px; }
  .water-row { margin: 196px 0 0 543px; }
  .road-row { margin: 282px 0 0 566px; }
  .report { width: 271px; height: 123px; margin: 202px 0 0 611px; padding: 4px 0 0; border: 0; border-radius: 7px; background: #d6d7d7; color: #1d1d1d; font: 500 49px Roboto, sans-serif; letter-spacing: -.5px; box-shadow: 0 7px 8px rgba(0, 0, 0, .22), 0 1px 4px rgba(0, 0, 0, .14); }
  .fab { width: 190px; height: 190px; flex: none; margin: 238px 0 0 1196px; border-radius: 50%; background: #000; display: flex; align-items: center; justify-content: center; box-shadow: 0 20px 28px rgba(0, 0, 0, .22), 0 2px 14px rgba(0, 0, 0, .1); }
  .fab svg { width: 82px; height: 58px; margin-top: 2px; }
</style>
